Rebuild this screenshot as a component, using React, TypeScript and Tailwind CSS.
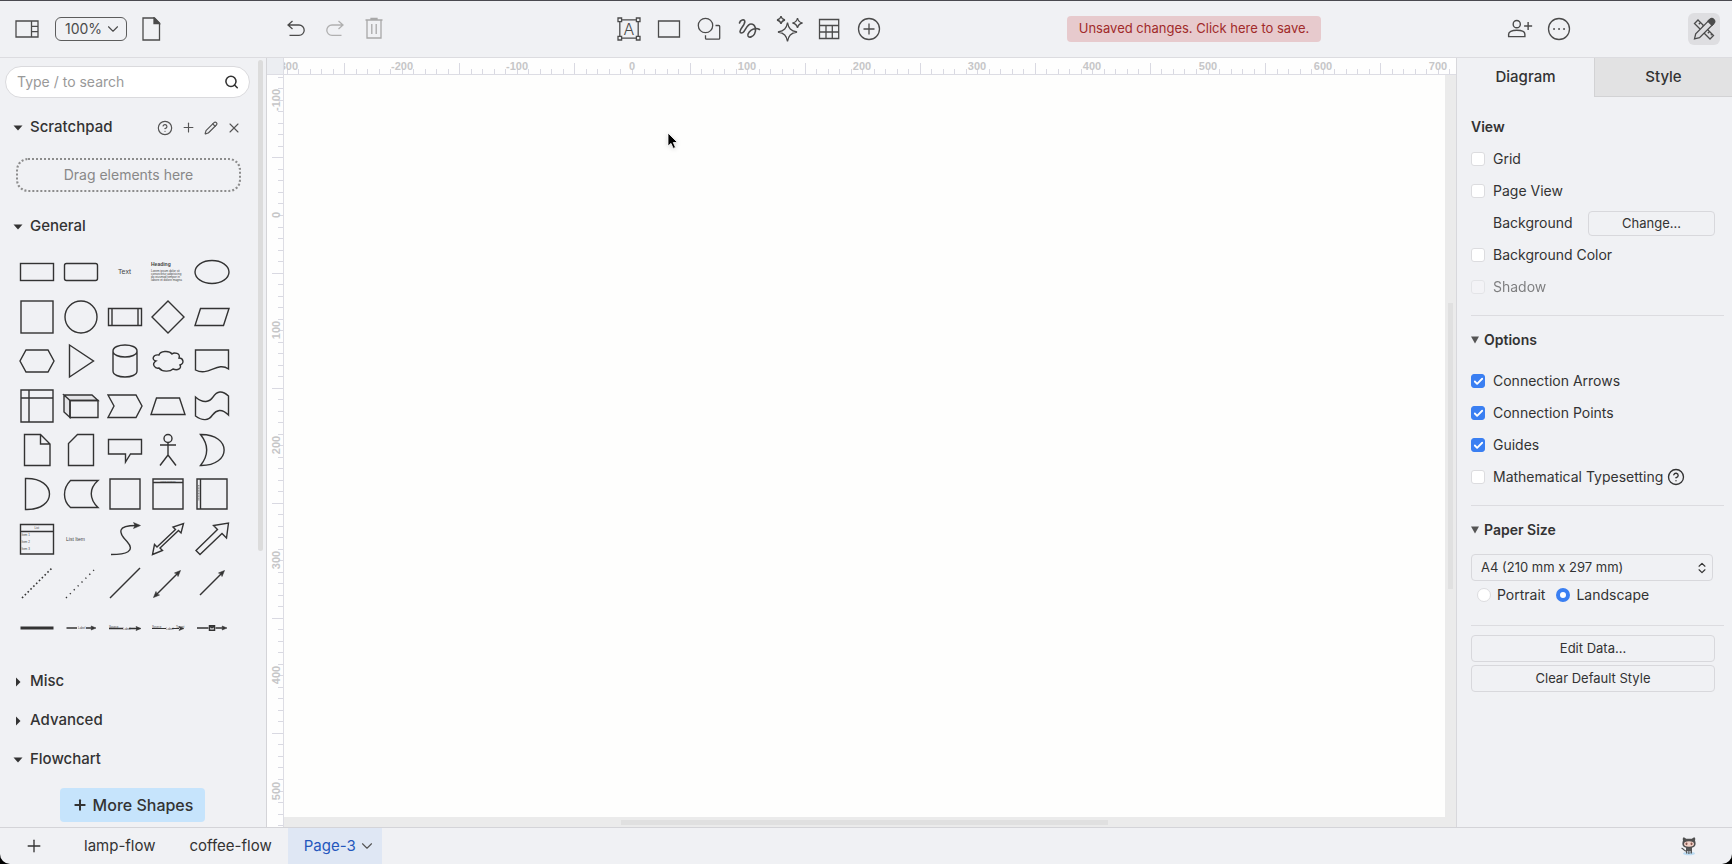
import { useState } from 'react';
import type { ReactNode } from 'react';
import { Check, ChevronDown, ChevronsUpDown, CircleQuestionMark, Pencil, Plus, Search, X } from 'lucide-react';

interface IconProps {
  children: ReactNode;
  className?: string;
}

function Icon({ children, className = 'size-6' }: IconProps) {
  return (
    <svg viewBox="0 0 24 24" fill="none" stroke="currentColor" strokeWidth="1.3" className={className} aria-hidden="true">
      {children}
    </svg>
  );
}

function ToolButton({ label, children, className = '' }: { label: string; children: ReactNode; className?: string }) {
  return (
    <button type="button" aria-label={label} title={label} className={`flex shrink-0 items-center justify-center ${className}`}>
      {children}
    </button>
  );
}

/* ---------- Toolbar ---------- */

function Toolbar() {
  return (
    <header className="flex h-[57px] shrink-0 items-center border-b border-[#dcdce0] pb-px text-[#4b4b4b]">
      <div className="flex w-[267px] shrink-0 items-center pl-[15px]">
        <ToolButton label="Shapes">
          <Icon>
            <path d="M1 4h22v16H1zM16.500 4v16M16.500 9.300H23M16.500 14.700H23" />
          </Icon>
        </ToolButton>
        <button type="button" className="ml-4 flex h-6 w-[72px] items-center justify-between rounded-md border border-[#5c5c5c] pr-1 pl-[9px] text-sm">
          100%
          <ChevronDown className="size-[18px]" strokeWidth={1.500} />
        </button>
        <ToolButton label="Page" className="ml-3">
          <Icon>
            <path d="M4 1h11.500L20.500 6v17H4z" />
            <path d="M15 1l5.500 5.500H15z" fill="currentColor" />
          </Icon>
        </ToolButton>
      </div>

      <div className="flex min-w-0 grow items-center">
        <div className="flex items-center gap-[15px] pl-[17px]">
          <ToolButton label="Undo">
            <Icon>
              <path d="M8.500 4L4 8l4.500 4M4 8h11a5.200 5.200 0 0 1 0 10.400H5.500" />
            </Icon>
          </ToolButton>
          <ToolButton label="Redo" className="text-[#b0b0b0]">
            <Icon>
              <path d="M15.500 4L20 8l-4.500 4M20 8H9a5.200 5.200 0 0 0 0 10.400h9.500" />
            </Icon>
          </ToolButton>
          <ToolButton label="Delete" className="text-[#a8a8a8]">
            <Icon>
              <path d="M3.500 3h17M9 3V1.500h6V3M5 3v18h14V3M9.800 7v10M14.200 7v10" />
            </Icon>
          </ToolButton>
        </div>
        <div className="grow-36" />
        <div className="flex items-center gap-4">
          <ToolButton label="Text">
            <Icon>
              <path d="M4.500 2.800h15M4.500 21.200h15M2.800 4.500v15M21.200 4.500v15" />
              <path d="M1 1h3.600v3.600H1zM19.400 1H23v3.600h-3.600zM1 19.400h3.600V23H1zM19.400 19.400H23V23h-3.600z" />
              <text x="12" y="17.500" textAnchor="middle" className="fill-current stroke-none font-[Inter,sans-serif] text-base font-light">
                A
              </text>
            </Icon>
          </ToolButton>
          <ToolButton label="Rectangle">
            <Icon>
              <path d="M1.500 4h21v16h-21z" />
            </Icon>
          </ToolButton>
          <ToolButton label="Shape">
            <Icon>
              <circle cx="8.500" cy="8.500" r="7.200" />
              <path d="M18.500 8.500h3.200q1 0 1 1v11.700q0 1-1 1H9.500q-1 0-1-1v-3" />
            </Icon>
          </ToolButton>
          <ToolButton label="Freehand">
            <Icon>
              <path
                strokeWidth="1.600"
                strokeLinecap="round"
                d="M2.500 6C3 3 7.500 1.500 7.800 4.500 8 8 3 11.500 3 14.500c0 2 2.500 2 4 0 2-2.500 3.500-7.500 7-7.500 4.500 0 5.500 6 3.500 10-1.500 3-5.500 4-6.500 2-1-2.500 2.500-6 5.500-7 2-.7 4-.7 6 .5"
              />
            </Icon>
          </ToolButton>
          <ToolButton label="Generate">
            <Icon className="size-6 overflow-visible">
              <path d="M10.500 5.500c1 6 3.200 8.300 9.500 9.500-6.300 1.200-8.500 3.500-9.500 9.500-1-6-3.200-8.300-9.500-9.500 6.300-1.200 8.500-3.500 9.500-9.500z" />
              <path d="M4-1q.6 3.400 4 4-3.400.6-4 4-.6-3.400-4-4 3.400-.6 4-4zM20.500 1q.8 4.200 5 5-4.200.8-5 5-.8-4.200-5-5 4.200-.8 5-5z" />
            </Icon>
          </ToolButton>
          <ToolButton label="Table">
            <Icon>
              <path d="M2.500 2.500h19.200V21.500H2.500zM2.500 8.500h19.200M2.500 15h19.200M9 8.500v13M15.300 8.500v13" />
            </Icon>
          </ToolButton>
          <ToolButton label="Insert">
            <Icon>
              <circle cx="12" cy="12" r="10.500" />
              <path d="M12 6.500v11M6.500 12h11" />
            </Icon>
          </ToolButton>
        </div>
        <div className="grow-29" />
        <button type="button" className="h-[26px] shrink-0 rounded-[4px] bg-[#e7cacd] px-3 text-[13px] text-[#a12a2a]">
          Unsaved changes. Click here to save.
        </button>
        <div className="grow-21" />
      </div>

      <div className="flex w-[276px] shrink-0 items-center pr-3 pl-[51px]">
        <ToolButton label="Share">
          <Icon className="size-[26px]">
            <circle cx="9" cy="7.500" r="3.300" />
            <path d="M1.500 19v-2.200c0-2.200 2.800-3.600 7.500-3.600s7.500 1.400 7.500 3.600V19zM19.500 5.500v7.500M15.800 9.200h7.400" />
          </Icon>
        </ToolButton>
        <ToolButton label="More" className="ml-[14px]">
          <Icon>
            <circle cx="12" cy="12" r="10.500" />
            <path strokeWidth="1.800" strokeLinecap="round" d="M7 12h.1M12 12h.1M17 12h.1" />
          </Icon>
        </ToolButton>
        <ToolButton label="Format" className="ml-auto size-8 rounded-md bg-[#dedee1]">
          <Icon>
            <path d="M6 3l15.500 15.500-3.500 3.500L2.500 6.500zM8.500 5.500L6.800 7.200M11.500 8.500l-1.200 1.200M17.500 14.500l-1.700 1.700M20 17l-1.200 1.200" />
            <path d="M2.500 21.800l1.200-5L17 3.300l4 4L7.500 20.600z" className="fill-[#dedee1]" />
            <path d="M16 4.300l1.800-1.800a2.700 2.700 0 0 1 4 4L20 8.300z" fill="currentColor" />
          </Icon>
        </ToolButton>
      </div>
    </header>
  );
}

/* ---------- Shape palette ---------- */

function Tiny({ x, y, children, className = 'text-[3px]' }: { x: number; y: number; children: ReactNode; className?: string }) {
  return (
    <text x={x} y={y} className={`fill-[#444] stroke-none font-[Liberation_Sans,sans-serif] ${className}`}>
      {children}
    </text>
  );
}

const shapes: { name: string; art: ReactNode }[] = [
  { name: 'Rectangle', art: <rect x="5.500" y="13.500" width="33" height="17" /> },
  { name: 'Rounded Rectangle', art: <rect x="5.500" y="13.500" width="33" height="17" rx="2" /> },
  { name: 'Text', art: <Tiny x={15} y={24} className="text-[7px]">Text</Tiny> },
  {
    name: 'Textbox',
    art: (
      <>
        <Tiny x={5} y={16} className="text-[5px] font-bold">Heading</Tiny>
        <Tiny x={5} y={22}>Lorem ipsum dolor sit</Tiny>
        <Tiny x={5} y={25}>consectetur adipisicing</Tiny>
        <Tiny x={5} y={28}>do eiusmod tempor in</Tiny>
        <Tiny x={5} y={31}>labore et dolore magna</Tiny>
      </>
    ),
  },
  { name: 'Ellipse', art: <ellipse cx="22" cy="22" rx="17" ry="11.500" /> },

  { name: 'Square', art: <rect x="6" y="6" width="32" height="32" /> },
  { name: 'Circle', art: <circle cx="22" cy="22" r="16" /> },
  { name: 'Process', art: <path d="M5.500 13.500h33v17h-33zM9 13.500v17M35 13.500v17" /> },
  { name: 'Diamond', art: <path d="M22 6l16 16-16 16L6 22z" /> },
  { name: 'Parallelogram', art: <path d="M10.500 13.500H39l-5.500 17H5z" /> },

  { name: 'Hexagon', art: <path d="M11 11h22l6 11-6 11H11L5 22z" /> },
  { name: 'Triangle', art: <path d="M10.500 6l24 16-24 16z" /> },
  {
    name: 'Cylinder',
    art: <path d="M10 12v20c0 8 24 8 24 0V12M10 12c0-8 24-8 24 0s-24 8-24 0z" />,
  },
  {
    name: 'Cloud',
    art: (
      <path d="M13 16c-6-1-8 5-3 6-5 3-1 8 3 7 3 4 11 4 14 1 5 2 9-1 7-4 5-2 3-7-1-7 2-5-5-6-7-4-3-4-12-3-13 1z" />
    ),
  },
  { name: 'Document', art: <path d="M5.500 11h33v19c-11-8-20 8-33 1z" /> },

  { name: 'Internal Storage', art: <path d="M6 6h32v32H6zM6 14h32M14 6v32" /> },
  {
    name: 'Cube',
    art: (
      <>
        <path d="M5 11h28l6 5.500H11zM5 11v17l6 5.500v-17z" className="fill-[#e4e4e7]" />
        <path d="M11 16.500h28v17H11z" />
      </>
    ),
  },
  { name: 'Step', art: <path d="M5 11h28l6 11-6 11.500H5L11 22z" /> },
  { name: 'Trapezoid', art: <path d="M10.500 14h23l5.500 16.500H5z" /> },
  { name: 'Tape', art: <path d="M5.500 13c8 7 14 5 17.500 0 4-6 9-7 15.500-1v19c-7-7-12-5-16 0-4 6-10 6-17 1z" /> },

  { name: 'Note', art: <path d="M9.500 6.500h16l9.500 9.500v21.500H9.500zM25.500 6.500V16H35" /> },
  { name: 'Card', art: <path d="M18.500 6.500h16v31H9.500v-22z" /> },
  { name: 'Callout', art: <path d="M5.500 11.500h33V26H27.500l-5 8v-8h-17z" /> },
  {
    name: 'Actor',
    art: (
      <>
        <circle cx="22" cy="10.500" r="4" />
        <path d="M22 14.500V27M14 17h16M22 27l-8 10.500M22 27l8 10.500" />
      </>
    ),
  },
  { name: 'Or', art: <path d="M10.500 6.500C42 6 42 38 10.500 37.500c8-10 8-21 0-31z" /> },

  { name: 'And', art: <path d="M10.500 6.500c32-1 32 32 0 31z" /> },
  { name: 'Data Storage', art: <path d="M11.500 8.500H39c-9 8-9 18 0 27H11.500c-8-7-8-19 0-27z" /> },
  { name: 'Container', art: <path d="M7 7h30v30H7z" /> },
  {
    name: 'Vertical Container',
    art: (
      <>
        <path d="M7 7h30v30H7zM7 10.500h30" />
        <Tiny x={14} y={9.5} className="text-[2px]">Vertical Container</Tiny>
      </>
    ),
  },
  {
    name: 'Horizontal Container',
    art: (
      <>
        <path d="M7 7h30v30H7zM10.500 7v30" />
        <path d="M8.800 13v16" strokeWidth="0.700" strokeDasharray="1 .6" />
      </>
    ),
  },

  {
    name: 'List',
    art: (
      <>
        <path d="M5.500 7.500h33v29.500h-33zM5.500 14.500h33" />
        <Tiny x={19.5} y={12}>List</Tiny>
        <Tiny x={6.5} y={19}>Item 1</Tiny>
        <Tiny x={6.5} y={26}>Item 2</Tiny>
        <Tiny x={6.5} y={33}>Item 3</Tiny>
      </>
    ),
  },
  { name: 'List Item', art: <Tiny x={7} y={24} className="text-[5px]">List Item</Tiny> },
  {
    name: 'Curve',
    art: (
      <>
        <path d="M8 37.500c15 0 25-3 16-13-9-9-10-16 9-16" />
        <path d="M37.500 8.500L30.500 5.500l1.500 3-1.500 3z" fill="#333" strokeWidth="0.500" />
      </>
    ),
  },
  {
    name: 'Bidirectional Arrow',
    art: <path d="M37.500 6.500l-2.500 9.500-2.500-2.500L14 31l2.500 2.500-10 4 2-10 2.500 2.500L29.500 12.500 27 10z" />,
  },
  { name: 'Arrow', art: <path d="M38.500 6l-2 15-4.500-4.500L10 37.500 6 33.500 27.500 12.500 23.500 8.500z" /> },

  { name: 'Dashed Line', art: <path d="M7 37L37 7" strokeWidth="1.600" strokeDasharray="1.600 2.400" /> },
  { name: 'Dotted Line', art: <path d="M7 37l28-28" strokeDasharray="1.300 4.200" /> },
  { name: 'Line', art: <path d="M7 37L37 7" /> },
  {
    name: 'Bidirectional Connector',
    art: (
      <>
        <path d="M10 34l22-22" />
        <path d="M34.500 9.500l-6 2.500 2.700.800.800 2.700zM7.500 36.500l6-2.500-2.700-.8-.8-2.700z" fill="#333" strokeWidth="0.600" />
      </>
    ),
  },
  {
    name: 'Directional Connector',
    art: (
      <>
        <path d="M10 34l22-22" />
        <path d="M34.500 9.500l-6 2.500 2.700.800.800 2.700z" fill="#333" strokeWidth="0.600" />
      </>
    ),
  },

  { name: 'Link', art: <path d="M5.500 22h33" strokeWidth="3" /> },
  {
    name: 'Connector with Label',
    art: (
      <>
        <path d="M7.500 22h10.500M27 22h7" />
        <path d="M37 22l-5-2 1 2-1 2z" fill="#333" strokeWidth="0.600" />
        <Tiny x={19} y={23}>Label</Tiny>
      </>
    ),
  },
  {
    name: 'Connector with 2 Labels',
    art: (
      <>
        <path d="M6 22.500h14M26 22.500h8" />
        <path d="M38 22.500l-5-2 1 2-1 2z" fill="#333" strokeWidth="0.600" />
        <Tiny x={6} y={22}>Source</Tiny>
        <Tiny x={20} y={23.5}>Label</Tiny>
      </>
    ),
  },
  {
    name: 'Connector with 3 Labels',
    art: (
      <>
        <path d="M6 22.500h14M26 22.500h7" strokeWidth="1" />
        <path d="M38 22.500l-5-2 1 2-1 2z" fill="#333" strokeWidth="0.500" />
        <Tiny x={6} y={22}>Source</Tiny>
        <Tiny x={20} y={23.5}>Label</Tiny>
        <Tiny x={30} y={22}>Target</Tiny>
      </>
    ),
  },
  {
    name: 'Connector with Symbol',
    art: (
      <>
        <path d="M7 22h11.500M25.500 22H34" />
        <path d="M19.500 19.800h5v4.400h-5zM19.500 19.800l2.500 2 2.500-2" strokeWidth="1.500" />
        <path d="M37 22l-5-2 1 2-1 2z" fill="#333" strokeWidth="0.600" />
      </>
    ),
  },
];

function SectionTitle({ title, open = false }: { title: string; open?: boolean }) {
  return (
    <button type="button" aria-expanded={open} className="flex h-[39px] items-center gap-[7px] text-[15px] font-medium text-[#333]">
      <svg viewBox="0 0 10 10" className="size-[10px]" fill="#333" aria-hidden="true">
        {open ? <path d="M.500 2.500h9L5 7.500z" /> : <path d="M3 .500v9L7.500 5z" />}
      </svg>
      {title}
    </button>
  );
}

function Sidebar() {
  return (
    <aside className="flex w-[267px] shrink-0 border-r border-[#d4d4d8]">
      <div className="flex min-w-0 grow flex-col pt-2">
        <label className="mr-2 ml-[5px] flex h-8 items-center rounded-full border border-[#dadadd] bg-white pr-[10px] pl-[11px]">
          <input
            type="search"
            aria-label="Search shapes"
            placeholder="Type / to search"
            className="min-w-0 grow bg-transparent text-sm outline-none placeholder:text-[#999]"
          />
          <Search className="size-4 text-[#333]" strokeWidth={2.500} />
        </label>

        <div className="mt-[10px] flex items-center justify-between pr-4 pl-[13px]">
          <SectionTitle title="Scratchpad" open />
          <div className="flex items-center gap-2 text-[#555]">
            <ToolButton label="Help"><CircleQuestionMark className="size-4" strokeWidth={1.800} /></ToolButton>
            <ToolButton label="Add"><Plus className="size-[15px]" strokeWidth={1.800} /></ToolButton>
            <ToolButton label="Edit"><Pencil className="size-[14px]" strokeWidth={2} /></ToolButton>
            <ToolButton label="Close"><X className="size-4" strokeWidth={1.600} /></ToolButton>
          </div>
        </div>
        <div className="mt-[11px] mr-[17px] ml-4 flex h-[34px] items-center justify-center rounded-xl border-2 border-dotted border-[#8c8c8c] text-sm text-[#888]">
          Drag elements here
        </div>

        <div className="mt-[15px] pl-[13px]">
          <SectionTitle title="General" open />
        </div>
        <div className="mt-1 ml-[15px] grid h-[400px] w-[219px] grid-cols-5 grid-rows-9">
          {shapes.map(shape => (
            <button key={shape.name} type="button" aria-label={shape.name} title={shape.name} className="flex items-center justify-center">
              <svg viewBox="0 0 44 44" className="size-11 shrink-0 overflow-visible" fill="none" stroke="#333" strokeWidth="1.400" aria-hidden="true">
                {shape.art}
              </svg>
            </button>
          ))}
        </div>

        <div className="mt-3 flex flex-col items-start pl-[13px]">
          <SectionTitle title="Misc" />
          <SectionTitle title="Advanced" />
          <SectionTitle title="Flowchart" open />
        </div>
        <button type="button" className="mt-auto mr-[53px] mb-[5px] ml-[60px] flex h-[34px] items-center justify-center gap-[5px] rounded-[4px] bg-[#c6e4fc] text-base font-medium text-[#333]">
          <Plus className="size-4" strokeWidth={3} />
          More Shapes
        </button>
      </div>
      {/* scrollbar */}
      <div className="flex w-2 shrink-0 flex-col pt-[2px]">
        <div className="h-16/25 w-[5px] rounded-full bg-[#dcdcdc]" />
      </div>
    </aside>
  );
}

/* ---------- Canvas with rulers ---------- */

const STEP = 11.51;

function Ruler({ origin, from, to, vertical = false }: { origin: number; from: number; to: number; vertical?: boolean }) {
  const ticks = Array.from({ length: to - from + 1 }, (_, i) => from + i);
  return (
    <svg className="block h-full w-full" aria-hidden="true">
      {ticks.map(n => {
        const at = Math.round(origin + n * STEP) + 0.5;
        const major = n % 10 !== 0 && n % 5 === 0;
        const start = major ? 5 : 11;
        return vertical ? (
          <line key={n} x1={start} x2={16} y1={at} y2={at} stroke="#d9d9e2" />
        ) : (
          <line key={n} x1={at} x2={at} y1={start} y2={16} stroke="#d9d9e2" />
        );
      })}
      {ticks
        .filter(n => n % 10 === 0)
        .map(n => {
          const at = Math.round(origin + n * STEP);
          return (
            <text
              key={n}
              x={vertical ? 13 : at}
              y={vertical ? at : 12}
              textAnchor="middle"
              transform={vertical ? `rotate(-90 13 ${at})` : undefined}
              className="fill-[#c6c6c8] font-[Liberation_Sans,sans-serif] text-[11px] font-bold"
            >
              {n * 10}
            </text>
          );
        })}
    </svg>
  );
}

function Canvas() {
  return (
    <main className="grid min-w-0 grow grid-cols-[17px_minmax(0,1fr)] grid-rows-[17px_minmax(0,1fr)]">
      <div className="border-r border-b border-[#dddde4] bg-[#eceef2]" />
      <div className="border-b border-[#dddde4] bg-[#fefefe]">
        <Ruler origin={348} from={-30} to={71} />
      </div>
      <div className="border-r border-[#dddde4] bg-[#fefefe]">
        <Ruler origin={140} from={-12} to={53} vertical />
      </div>
      <div className="grid min-h-0 grid-cols-[minmax(0,1fr)_11px] grid-rows-[minmax(0,1fr)_10px] bg-[#ebebeb]">
        <div className="relative bg-[#fefefd]">
          <svg viewBox="0 0 12 18" className="absolute top-[57px] left-[383px] h-[18px] w-3 drop-shadow-sm" aria-hidden="true">
            <path d="M1 1v13l3-2.600 2.200 5 2.300-1-2.200-4.900h4.200z" fill="#000" stroke="#fff" strokeWidth="0.800" />
          </svg>
        </div>
        <div className="flex flex-col items-center">
          <div className="grow-23" />
          <div className="w-[5px] grow-29 bg-[#e0e0e0]" />
          <div className="grow-23" />
        </div>
        <div className="flex items-center">
          <div className="grow-34" />
          <div className="h-[5px] grow-49 bg-[#e0e0e0]" />
          <div className="grow-34" />
        </div>
      </div>
    </main>
  );
}

/* ---------- Format panel ---------- */

interface OptionProps {
  id: string;
  label: string;
  checked?: boolean;
  disabled?: boolean;
  children?: ReactNode;
}

function Option({ id, label, checked = false, disabled = false, children }: OptionProps) {
  return (
    <div className={`flex h-8 items-center ${disabled ? 'opacity-60' : ''}`}>
      <span className="grid size-[14px] place-items-center">
        <input
          id={id}
          type="checkbox"
          defaultChecked={checked}
          disabled={disabled}
          className="peer col-start-1 row-start-1 size-[14px] appearance-none rounded-[3px] border border-[#dcdcdf] bg-white checked:border-[#3a7ff2] checked:bg-[#3a7ff2] disabled:bg-[#f5f5f8]"
        />
        <Check className="pointer-events-none col-start-1 row-start-1 hidden size-[11px] text-white peer-checked:block" strokeWidth={4} />
      </span>
      <label htmlFor={id} className="ml-2">
        {label}
      </label>
      {children}
    </div>
  );
}

function PanelHeading({ children }: { children: ReactNode }) {
  return (
    <h2 className="mt-[14px] flex h-5 items-center gap-[5px] font-semibold">
      <svg viewBox="0 0 8 8" className="size-2" fill="#555" aria-hidden="true">
        <path d="M0 .500h8L4 7.500z" />
      </svg>
      {children}
    </h2>
  );
}

const radioClass =
  'size-[14px] appearance-none rounded-full border border-[#dcdcdf] bg-white checked:border-4 checked:border-[#3a7ff2]';

const buttonClass = 'rounded-[4px] border border-[#d8d8dc] text-[13px]';

function FormatPanel() {
  const [tab, setTab] = useState('Diagram');
  return (
    <aside className="flex w-[276px] shrink-0 flex-col border-l border-[#d8d8dc]">
      <div className="flex h-[39px] shrink-0" role="tablist">
        {['Diagram', 'Style'].map(name => (
          <button
            key={name}
            type="button"
            role="tab"
            aria-selected={tab === name}
            onClick={() => setTab(name)}
            className={`flex-1 border-b text-[15px] font-medium ${tab === name ? 'border-transparent' : 'border-l border-[#d2d2d4] bg-[#e2e2e3]'}`}
          >
            {name}
          </button>
        ))}
      </div>

      <div className="flex flex-col pt-5 pr-2 pl-[14px] text-sm">
        <h2 className="h-5 font-semibold">View</h2>
        <div className="mt-[6px]">
          <Option id="grid" label="Grid" />
          <Option id="page-view" label="Page View" />
          <div className="flex h-8 items-center justify-between pr-[9px] pl-[22px]">
            Background
            <button type="button" className={`h-[25px] w-[127px] ${buttonClass}`}>Change...</button>
          </div>
          <Option id="background-color" label="Background Color" />
          <Option id="shadow" label="Shadow" disabled />
        </div>

        <hr className="mt-3 border-[#dcdce0]" />
        <PanelHeading>Options</PanelHeading>
        <div className="mt-[15px]">
          <Option id="arrows" label="Connection Arrows" checked />
          <Option id="points" label="Connection Points" checked />
          <Option id="guides" label="Guides" checked />
          <Option id="math" label="Mathematical Typesetting">
            <ToolButton label="Help" className="ml-1">
              <CircleQuestionMark className="size-[18px]" strokeWidth={1.800} />
            </ToolButton>
          </Option>
        </div>

        <hr className="mt-3 border-[#dcdce0]" />
        <PanelHeading>Paper Size</PanelHeading>
        <div className="mt-[14px] mr-[11px] grid items-center">
          <select aria-label="Paper size" defaultValue="a4" className={`col-start-1 row-start-1 h-[27px] appearance-none px-[9px] ${buttonClass}`}>
            <option value="a4">A4 (210 mm x 297 mm)</option>
            <option value="a3">A3 (297 mm x 420 mm)</option>
          </select>
          <ChevronsUpDown className="pointer-events-none col-start-1 row-start-1 mr-1 size-[14px] justify-self-end" strokeWidth={2} />
        </div>
        <div className="mt-[2px] flex h-6 items-center pl-[6px]">
          <input id="portrait" type="radio" name="orientation" className={radioClass} />
          <label htmlFor="portrait" className="ml-[6px]">Portrait</label>
          <input id="landscape" type="radio" name="orientation" defaultChecked className={`ml-[11px] ${radioClass}`} />
          <label htmlFor="landscape" className="ml-[6px]">Landscape</label>
        </div>

        <hr className="mt-[18px] border-[#dcdce0]" />
        <div className="mt-[9px] mr-[9px] flex flex-col gap-[3px]">
          <button type="button" className={`h-[27px] ${buttonClass}`}>Edit Data...</button>
          <button type="button" className={`h-[27px] ${buttonClass}`}>Clear Default Style</button>
        </div>
      </div>
    </aside>
  );
}

/* ---------- Page tabs ---------- */

function PageTabs() {
  return (
    <footer className="flex h-[37px] shrink-0 items-center border-t border-[#d4d4d8] text-[15px]">
      <ToolButton label="Insert page" className="ml-6">
        <Plus className="size-5" strokeWidth={1.600} />
      </ToolButton>
      <button type="button" className="ml-10">lamp-flow</button>
      <button type="button" className="ml-[34px]">coffee-flow</button>
      <button type="button" className="ml-4 flex h-full w-[94px] items-center justify-end gap-[2px] bg-[#dfe7f4] pr-[6px] text-[#2457bd]">
        Page-3
        <ChevronDown className="size-[18px] text-[#555]" strokeWidth={1.500} />
      </button>
      <ToolButton label="GitHub" className="mr-8 ml-auto">
        <svg viewBox="0 0 22 22" className="size-[22px]" aria-hidden="true">
          <ellipse cx="11" cy="18.500" rx="6" ry="1.800" fill="#bcdcf3" />
          <path d="M3.500 13.500c2-.5 2.500 3 5.500 2.500" fill="none" stroke="#555" strokeWidth="1.200" />
          <path d="M8 12h6v6.500h-1.500V16h-1v3h-1.200v-3h-1v2.500H8z" fill="#555" />
          <path d="M5 2.500c1.500 0 2.500.600 3 1.200h6c.5-.6 1.500-1.200 3-1.200.4 1.500.2 2.500 0 3 1.500 4.500.5 7.500-6 7.500s-7.500-3-6-7.500c-.2-.5-.4-1.500 0-3z" fill="#505050" />
          <ellipse cx="11" cy="9" rx="5" ry="2.800" fill="#f3d3c9" />
          <ellipse cx="8.500" cy="8.800" rx="1" ry="1.400" fill="#8a5a50" />
          <ellipse cx="13.500" cy="8.800" rx="1" ry="1.400" fill="#8a5a50" />
        </svg>
      </ToolButton>
    </footer>
  );
}

export default function App() {
  return (
    <div className="h-screen bg-black font-[Inter,sans-serif] text-[#333]">
      <div className="flex h-full flex-col overflow-hidden rounded-b-[10px] border-t border-[#4a4a50] bg-[#f0f1f4]">
        <Toolbar />
        <div className="flex min-h-0 grow">
          <Sidebar />
          <Canvas />
          <FormatPanel />
        </div>
        <PageTabs />
      </div>
    </div>
  );
}
